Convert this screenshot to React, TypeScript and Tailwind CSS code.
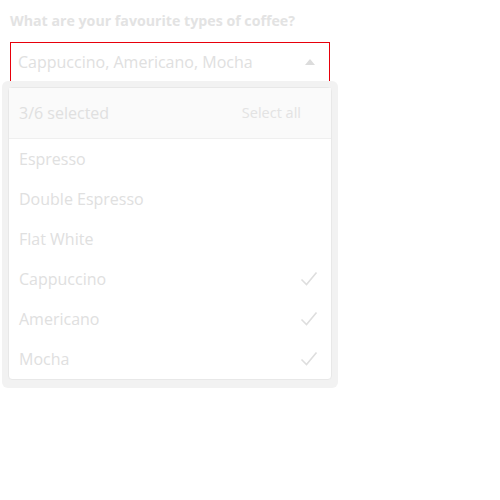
import { useState } from 'react'

const options = ['Espresso', 'Double Espresso', 'Flat White', 'Cappuccino', 'Americano', 'Mocha']

function Check() {
  return (
    <svg width="18" height="16" viewBox="0 0 18 16" fill="none">
      <path d="M1.5 8.5 L6.5 13.5 L16.5 1.5" stroke="#dedede" strokeWidth="1.6" />
    </svg>
  )
}

export default function App() {
  const [selected] = useState(['Cappuccino', 'Americano', 'Mocha'])

  return (
    <div className="px-[10px] pt-[11px] pb-[20px] font-['Open_Sans',sans-serif] text-[#e0e0e0]">
      {/* 標籤 */}
      <div className="text-[14.2px] font-bold leading-5 text-[#e3e3e3]">What are your favourite types of coffee?</div>

      <div className="mt-[11px] w-[320px]">
        <div className="flex h-[40px] items-center border border-red-600 pl-[7px] pr-[14px]">
          <span className="flex-1 text-base">{selected.join(', ')}</span>
          <svg width="10" height="6" viewBox="0 0 10 6">
            <path d="M0 6 L5 0 L10 6 Z" fill="#dcdcdc" />
          </svg>
        </div>

        {/* 下拉選單 */}
        <div className="relative z-10 -mx-[8px] -mt-[1px] w-[336px] rounded-md bg-[#f2f2f2] px-[6px] pt-[6px] pb-[8px]">
          <div className="rounded-sm border border-[#e8e8e8] bg-white">
            <div className="flex h-[51px] items-center justify-between border-b border-[#efefef] bg-[#fafafa] pl-[10px] pr-[30px]">
              <span className="text-base">
                {selected.length}/{options.length} selected
              </span>
              <span className="text-[14.5px] text-[#e3e3e3]">Select all</span>
            </div>
            {options.map((o) => (
              <div key={o} className="flex h-[40px] items-center justify-between pl-[10px] pr-[13px]">
                <span className="text-base">{o}</span>
                {selected.includes(o) && <Check />}
              </div>
            ))}
          </div>
        </div>
      </div>
    </div>
  )
}
